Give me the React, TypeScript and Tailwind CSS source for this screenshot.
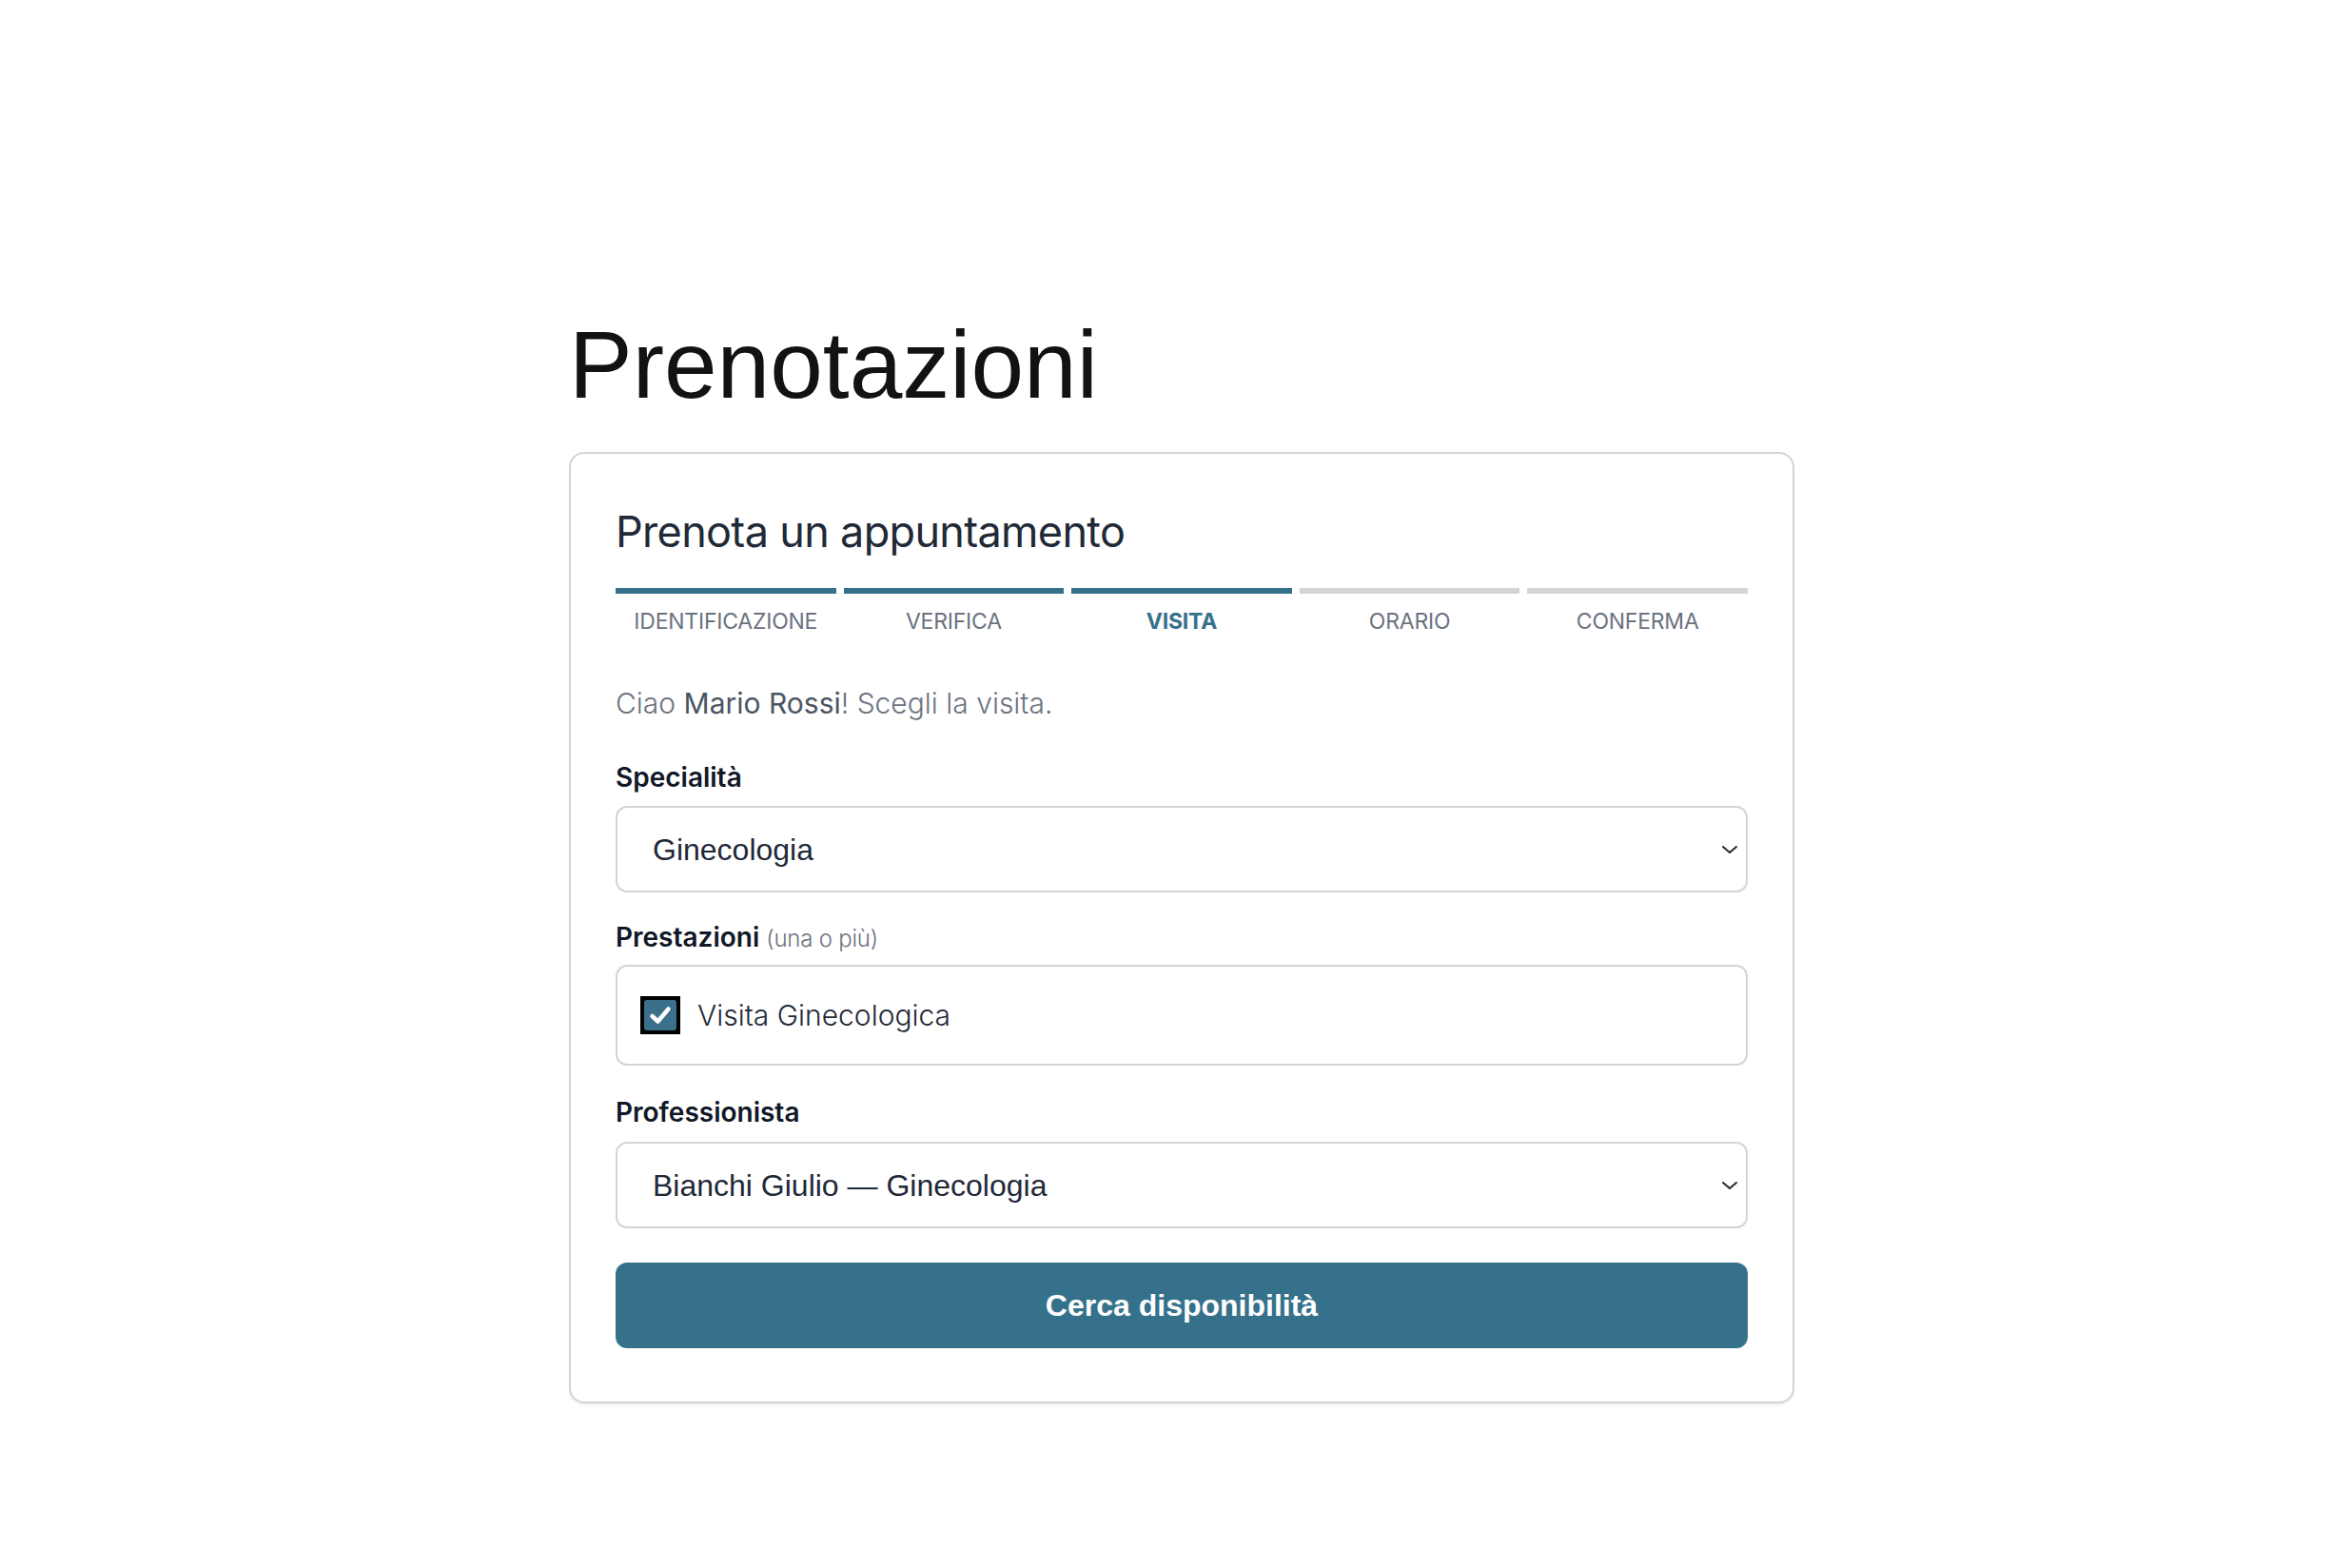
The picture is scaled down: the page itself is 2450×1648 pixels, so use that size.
import React from 'react';

const steps = ['Identificazione', 'Verifica', 'Visita', 'Orario', 'Conferma'];
const current = 2;

const Chevron = () => (
  <svg width="18" height="10" viewBox="0 0 18 10" fill="none" className="shrink-0">
    <path d="M2 2 L9 8 L16 2" stroke="#27272a" strokeWidth="2" strokeLinecap="round" strokeLinejoin="round" />
  </svg>
);

const SelectBox = ({ value }: { value: string }) => (
  <div className="flex h-[91px] items-center justify-between rounded-[12px] border-2 border-[#d4d4d8] bg-white pl-[37px] pr-[8px]">
    <span className="font-['Liberation_Sans',Arial,sans-serif] text-[32px] leading-none text-[#1f2937]">{value}</span>
    <Chevron />
  </div>
);

export default function App() {
  return (
    <div className="min-h-screen bg-white pt-[333px] font-['Inter',sans-serif]">
      <div className="ml-[598px] w-[1288px]">
        <h1 className="font-['Liberation_Sans',Arial,sans-serif] text-[100px] leading-none font-normal text-[#121212]">
          Prenotazioni
        </h1>

        <div className="mt-[42px] rounded-[16px] border-2 border-[#d4d4d8] bg-white px-[47px] pt-[59px] pb-[56px] shadow-[0_2px_2px_rgba(0,0,0,0.06)]">
          <h2 className="text-[45px] leading-none font-normal tracking-[-0.015em] text-[#1f2937]">
            Prenota un appuntamento
          </h2>

          {/* step indicator */}
          <div className="mt-[37px] grid grid-cols-5 gap-[8px]">
            {steps.map((s, i) => (
              <div key={s} className="flex flex-col items-center">
                <div className={`h-[6px] w-full ${i <= current ? 'bg-[#36718b]' : 'bg-[#d4d4d8]'}`} />
                <span
                  className={`mt-[18px] text-[23px] leading-none uppercase tracking-[-0.01em] ${
                    i === current ? 'font-bold text-[#36718b]' : 'font-normal text-[#6b7280]'
                  }`}
                >
                  {s}
                </span>
              </div>
            ))}
          </div>

          <p className="mt-[57px] text-[30px] leading-[34px] font-light text-[#6b7280]">
            Ciao <span className="font-normal text-[#4b5563]">Mario Rossi</span>! Scegli la visita.
          </p>

          <label className="mt-[45px] block text-[28px] leading-[32px] font-semibold text-[#111827]">
            Specialità
          </label>
          <div className="mt-[14px]">
            <SelectBox value="Ginecologia" />
          </div>

          <label className="mt-[31px] block text-[28px] leading-[32px] font-semibold text-[#111827]">
            Prestazioni{' '}
            <span className="text-[24px] font-light tracking-[-0.01em] text-[#6b7280]">(una o più)</span>
          </label>
          <div className="mt-[11px] flex h-[106px] items-center rounded-[12px] border-2 border-[#d4d4d8] pl-[24px]">
            <span className="flex h-[40px] w-[42px] items-center justify-center bg-black p-[4px]">
              <span className="flex h-full w-full items-center justify-center rounded-[3px] bg-[#3a7089]">
                <svg width="24" height="22" viewBox="0 0 24 22" fill="none">
                  <path d="M3.5 12 L9.5 17.5 L20.5 4.5" stroke="white" strokeWidth="4.5" strokeLinecap="round" strokeLinejoin="round" />
                </svg>
              </span>
            </span>
            <span className="ml-[18px] text-[30px] leading-none font-light text-[#1f2937]">
              Visita Ginecologica
            </span>
          </div>

          <label className="mt-[33px] block text-[28px] leading-[32px] font-semibold text-[#111827]">
            Professionista
          </label>
          <div className="mt-[15px]">
            <SelectBox value="Bianchi Giulio — Ginecologia" />
          </div>

          <button className="mt-[36px] flex h-[90px] w-full items-center justify-center rounded-[12px] bg-[#36718b] font-['Liberation_Sans',Arial,sans-serif] text-[32px] font-bold text-white">
            Cerca disponibilità
          </button>
        </div>
      </div>
    </div>
  );
}
